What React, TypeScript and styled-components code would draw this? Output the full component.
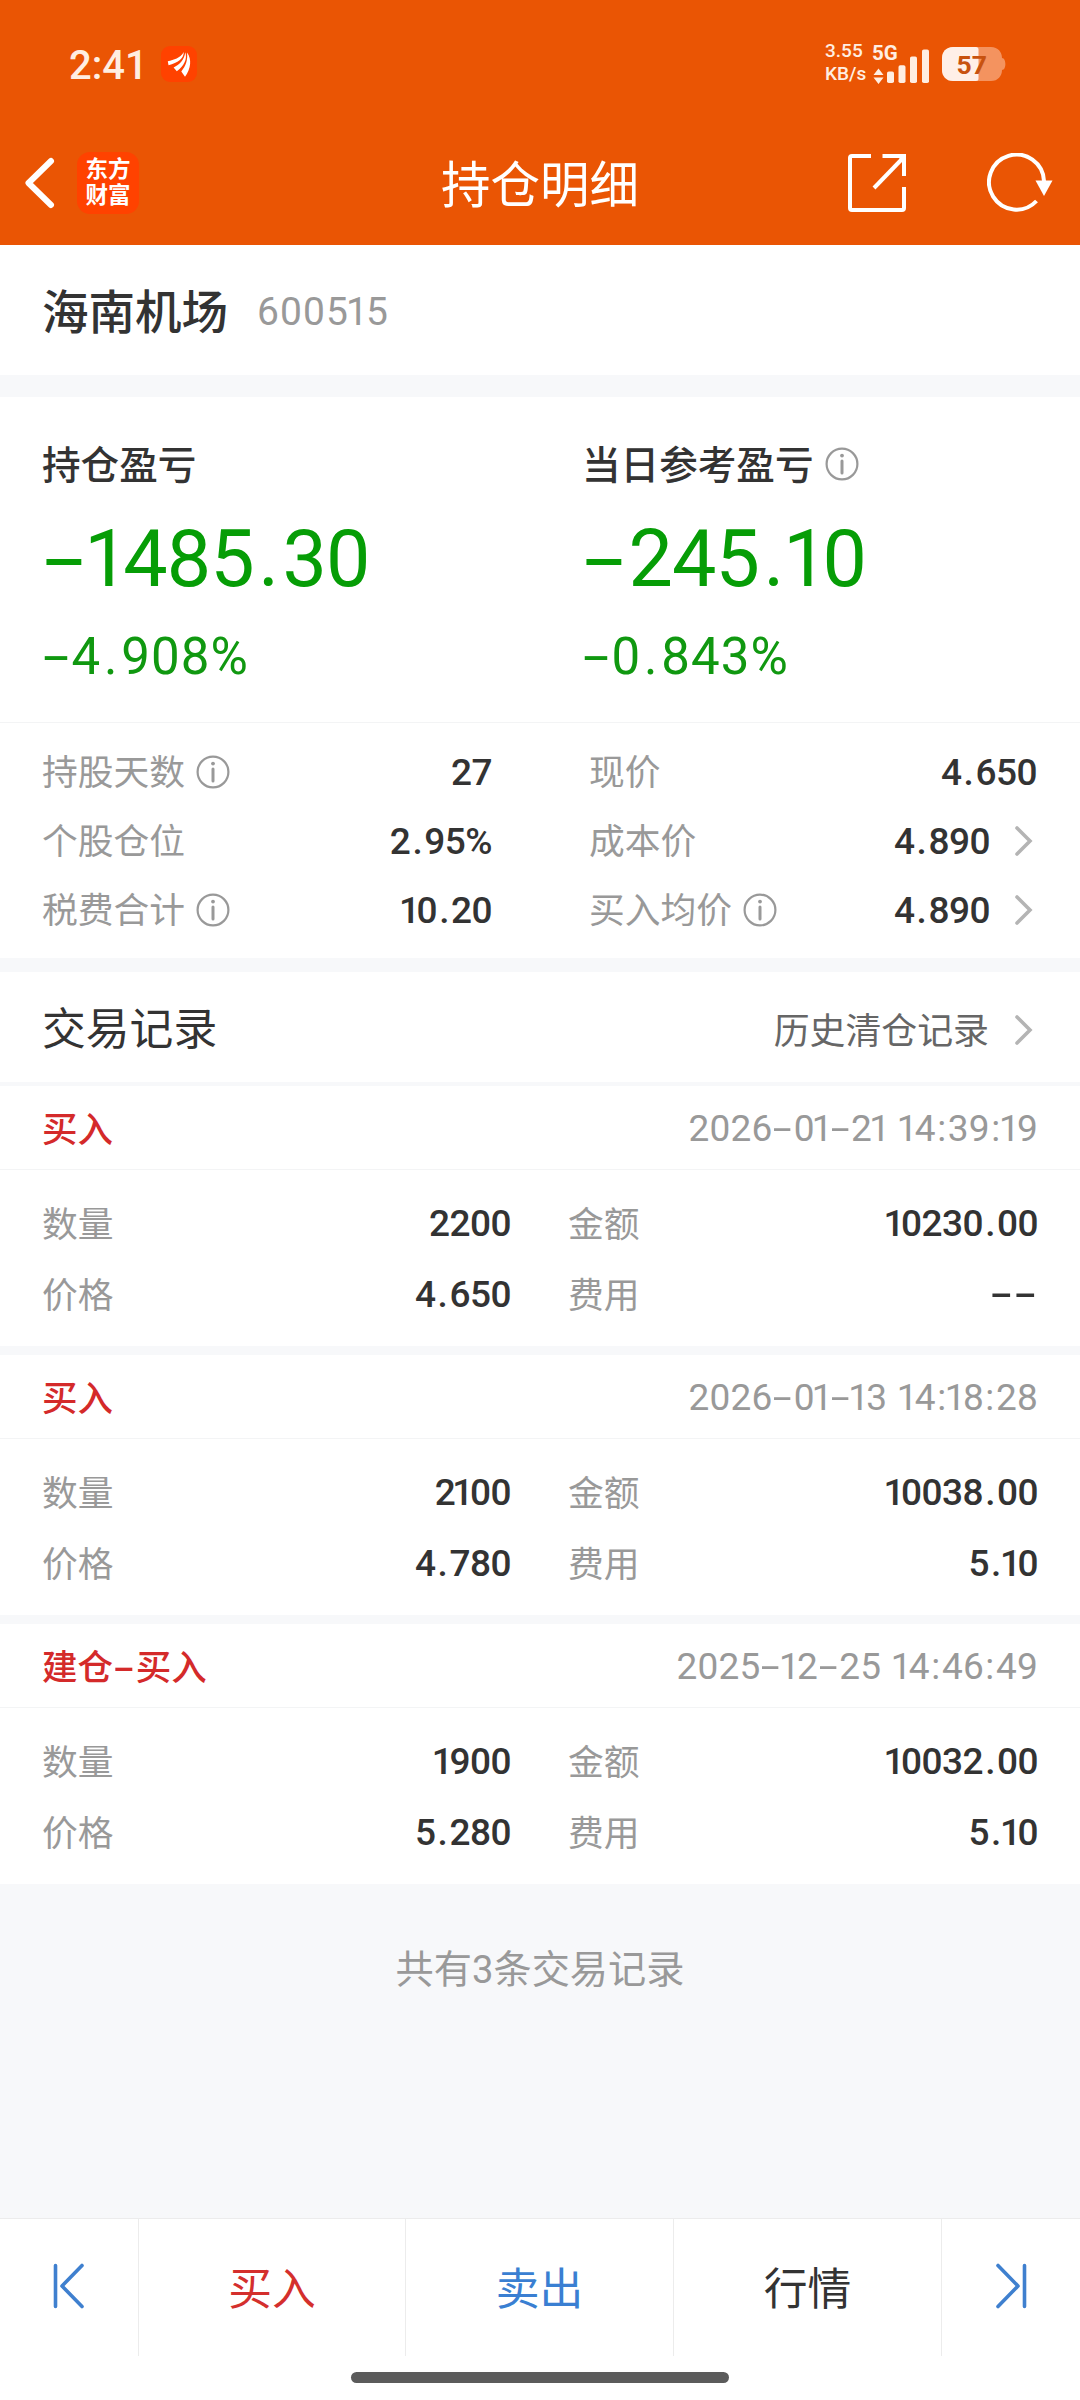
import React from "react";
import styled, { createGlobalStyle } from "styled-components";

const Global = createGlobalStyle`
  body { margin: 0; background: #f7f8fa; }
  * { box-sizing: border-box; }
`;

const Screen = styled.div`
  width: 1080px;
  height: 2400px;
  display: flex;
  flex-direction: column;
  background: #f7f8fa;
  color: #333;
  overflow: hidden;
  font-family: Roboto, "Noto Sans CJK SC", sans-serif;
`;

const Header = styled.header`
  height: 245px;
  background: #ea5504;
  color: #fff;
`;

const StatusBar = styled.div`
  height: 122px;
  padding: 6px 73px 0 69px;
  display: flex;
  align-items: center;
  color: #ffeee2;
`;

const Clock = styled.span`
  width: 92px;
  font-size: 40px;
  font-weight: 500;
  line-height: 40px;
  padding-top: 3px;
`;

const StatusRight = styled.div`
  margin-left: auto;
  display: flex;
  align-items: center;
`;

const Speed = styled.div`
  width: 47px;
  font-size: 19px;
  line-height: 23px;
  font-weight: 500;
  padding-bottom: 4px;
`;

const NavBar = styled.div`
  height: 123px;
  display: grid;
  grid-template-columns: 340px 1fr 340px;
  align-items: center;
`;

const NavLeft = styled.div`
  display: flex;
  align-items: center;
  gap: 21px;
  padding-left: 24px;
  padding-bottom: 2px;
`;

const Brand = styled.div`
  width: 62px;
  height: 62px;
  border-radius: 13px;
  background: #ff4200;
  font-size: 22.5px;
  line-height: 26px;
  font-weight: 700;
  text-align: center;
  padding-top: 4px;
`;

const Title = styled.h1`
  margin: 0;
  padding-top: 5px;
  text-align: center;
  font-size: 49.5px;
  line-height: 60px;
  font-weight: 400;
`;

const NavRight = styled.div`
  display: flex;
  align-items: center;
  justify-content: flex-end;
  gap: 80px;
  padding-right: 27px;
  padding-bottom: 2px;
`;

const Stock = styled.section`
  height: 130px;
  background: #fff;
  display: flex;
  align-items: center;
  padding: 2px 42px 0;
  gap: 29px;
`;

const StockName = styled.span`
  font-size: 46.5px;
  font-weight: 500;
  padding-bottom: 5px;
`;

const StockCode = styled.span`
  padding-top: 2px;
  font-size: 39px;
  letter-spacing: 1.1px;
  color: #999;
`;

const Summary = styled.section`
  margin-top: 22px;
  height: 326px;
  background: #fff;
  border-bottom: 1px solid #f3f4f5;
  display: grid;
  grid-template-columns: 540px 1fr;
  padding-top: 45px;
`;

const Profit = styled.div`
  padding-left: 42px;
`;

const ProfitLabel = styled.div`
  height: 44px;
  display: flex;
  align-items: center;
  gap: 12px;
  font-size: 38.6px;
  font-weight: 500;
`;

const Dash = styled.span`
  display: inline-block;
  letter-spacing: 0;
  transform: scaleX(1.85);
  margin: 0 0.17em 0 0.13em;
`;

const One = styled.span`
  margin: 0 -0.08em;
`;

const Point = styled.span`
  margin: 0 0.055em;
`;

const Colon = styled.span`
  margin: 0 0.04em;
`;

const BigNumber = styled.div`
  margin-top: 27px;
  height: 92px;
  line-height: 92px;
  padding-left: 1px;
  font-size: 79px;
  letter-spacing: -0.9px;
  color: #069d06;

  ${One} {
    margin: 0 -0.055em;
  }
`;

const Percent = styled.div`
  margin-top: 20px;
  height: 64px;
  line-height: 64px;
  font-size: 51px;
  letter-spacing: 1.1px;
  color: #109810;
`;

const Details = styled.section`
  height: 235px;
  background: #fff;
  display: grid;
  grid-template-columns: 450px 448px;
  column-gap: 97px;
  grid-auto-rows: 69px;
  padding: 14px 42px 0;
`;

const Row = styled.div`
  display: flex;
  align-items: center;
  justify-content: space-between;
`;

const Label = styled.span`
  display: flex;
  align-items: center;
  gap: 11px;
  font-size: 35.75px;
  color: #999;
`;

const LabelText = styled.span`
  padding-bottom: 4px;
`;

const Value = styled.span`
  display: flex;
  align-items: center;
  padding-top: 1px;
  font-size: 37px;
  font-weight: 500;
  letter-spacing: -0.5px;
  color: #333;
`;

const RecordsHead = styled.section`
  margin-top: 14px;
  height: 110px;
  background: #fff;
  display: flex;
  align-items: center;
  justify-content: space-between;
  padding: 5px 43px 0 42px;
`;

const RecordsTitle = styled.h2`
  margin: 0;
  padding-bottom: 8px;
  font-size: 43.8px;
  font-weight: 400;
`;

const HistoryLink = styled.span`
  display: flex;
  align-items: center;
  gap: 1px;
  font-size: 35.9px;
  color: #666;
`;

const Records = styled.div`
  margin-top: 4px;
  display: flex;
  flex-direction: column;
  gap: 9px;
`;

const RecordCard = styled.article`
  height: 260px;
  background: #fff;
`;

const RecordTop = styled.div`
  height: 84px;
  border-bottom: 1px solid #f3f4f5;
  display: flex;
  align-items: center;
  justify-content: space-between;
  padding: 2px 42px 0 42px;
`;

const Side = styled.span`
  padding-bottom: 5px;
  font-size: 35.5px;
  font-weight: 500;
  color: #d42a2a;
`;

const Time = styled.span`
  font-size: 37px;
  letter-spacing: 0.2px;
  word-spacing: 3px;
  color: #999;
`;

const RecordGrid = styled.div`
  display: grid;
  grid-template-columns: 469px 470px;
  column-gap: 57px;
  grid-auto-rows: 71px;
  padding: 18px 42px 0;

  ${Value} {
    padding: 0 0 1px;
  }
`;

const Total = styled.p`
  margin: 58px 0 0;
  line-height: 56px;
  text-align: center;
  font-size: 38.2px;
  color: #999;
`;

const Footer = styled.footer`
  margin-top: auto;
  height: 182px;
  border-top: 1px solid #ececec;
  background: #fff;
`;

const Tabs = styled.nav`
  height: 137px;
  display: grid;
  grid-template-columns: 138px 267px 268px 268px 139px;
`;

const Tab = styled.div<{ $color?: string }>`
  display: flex;
  align-items: center;
  justify-content: center;
  font-size: 43.8px;
  padding-bottom: 4px;
  color: ${(p) => p.$color ?? "#333"};
  & + & { border-left: 1px solid #ececec; }
`;

const HomePill = styled.div`
  width: 378px;
  height: 11px;
  margin: 16px auto 0;
  border-radius: 6px;
  background: #5b5b5b;
`;

const Arrow = styled.svg`
  margin-left: 24px;
  margin-right: 3px;
`;

function Num({ children }: { children: string }) {
  return (
    <span>
      {children.split("").map((c, i) => {
        if (c === "-") return <Dash key={i}>-</Dash>;
        if (c === "1") return <One key={i}>1</One>;
        if (c === ".") return <Point key={i}>.</Point>;
        if (c === ":") return <Colon key={i}>:</Colon>;
        return c;
      })}
    </span>
  );
}

function Info() {
  return (
    <svg width="34" height="34" viewBox="0 0 34 34" fill="none" stroke="#999">
      <circle cx="17" cy="17" r="15.4" strokeWidth="2.2" />
      <path d="M17 14v12" strokeWidth="3" strokeLinecap="round" />
      <circle cx="17" cy="8.6" r="1.9" fill="#999" stroke="none" />
    </svg>
  );
}

function Chevron() {
  return (
    <Arrow width="20" height="32" viewBox="0 0 20 32" fill="none" stroke="#b4b4b4" strokeWidth="3.6" strokeLinecap="round">
      <path d="M3 3l13 13L3 29" />
    </Arrow>
  );
}

function AppBadge() {
  return (
    <svg width="36" height="36" viewBox="0 0 36 36">
      <rect width="36" height="36" rx="9" fill="#ff4200" />
      <path d="M6.800 15.300C13 13.500 19 12.500 22.800 6C22.600 13 17 16.500 7.500 19.200Z" fill="#fff" />
      <path d="M12.600 21.500C18.500 18.500 23.200 14 24.300 6.200C26.500 13 23 20 15.800 25.300Z" fill="#fff" />
      <path d="M20.300 25.500C24.800 20 27 14 26 6.600C31 13 30 23 24 30.800Z" fill="#fff" />
    </svg>
  );
}

function Signal() {
  return (
    <svg width="66" height="54" viewBox="0 -6 66 54" fill="#ffeee2">
      <text x="0" y="17" fontFamily="Roboto, sans-serif" fontSize="20.500" fontWeight="700">5G</text>
      <path d="M1.500 32L6.500 25.500L11.500 32ZM1.500 34.500L6.500 41L11.500 34.500Z" />
      <rect x="15" y="28.500" width="7" height="11.500" rx="1.800" />
      <rect x="26.500" y="22.200" width="7" height="17.800" rx="1.800" />
      <rect x="38" y="13.500" width="7" height="26.500" rx="1.800" />
      <rect x="50" y="6.500" width="7" height="33.500" rx="1.800" />
    </svg>
  );
}

const BatteryIcon = styled.svg`
  margin-left: 4px;
  margin-right: 1px;
`;

function Battery() {
  return (
    <BatteryIcon width="64" height="34" viewBox="0 0 64 34">
      <path d="M11 0H49C56 0 60 5 60 11C64.500 11 64.500 23 60 23C60 29 56 34 49 34H11C4 34 0 29 0 23V11C0 5 4 0 11 0Z" fill="#f4935f" />
      <path d="M11 0H34Q36.500 0 36.500 2.500V31.500Q36.500 34 34 34H11C4 34 0 29 0 23V11C0 5 4 0 11 0Z" fill="#ffefe7" />
      <text x="14.500" y="27" fontFamily="Roboto, sans-serif" fontSize="26.500" fontWeight="700" fill="#c8520f">57</text>
    </BatteryIcon>
  );
}

const details: [string, boolean, string, boolean][] = [
  ["持股天数", true, "27", false],
  ["现价", false, "4.650", false],
  ["个股仓位", false, "2.95%", false],
  ["成本价", false, "4.890", true],
  ["税费合计", true, "10.20", false],
  ["买入均价", true, "4.890", true],
];

const records = [
  { side: "买入", time: "2026-01-21 14:39:19", qty: "2200", amount: "10230.00", price: "4.650", fee: "--" },
  { side: "买入", time: "2026-01-13 14:18:28", qty: "2100", amount: "10038.00", price: "4.780", fee: "5.10" },
  { side: "建仓-买入", time: "2025-12-25 14:46:49", qty: "1900", amount: "10032.00", price: "5.280", fee: "5.10" },
];

function Field({ label, info, value, more }: { label: string; info?: boolean; value: string; more?: boolean }) {
  return (
    <Row>
      <Label><LabelText>{label}</LabelText>{info && <Info />}</Label>
      <Value><Num>{value}</Num>{more && <Chevron />}</Value>
    </Row>
  );
}

export default function App() {
  return (
    <Screen>
      <Global />
      <Header>
        <StatusBar>
          <Clock>2:41</Clock>
          <AppBadge />
          <StatusRight>
            <Speed>3.55<br />KB/s</Speed>
            <Signal />
            <Battery />
          </StatusRight>
        </StatusBar>
        <NavBar>
          <NavLeft>
            <svg width="32" height="54" viewBox="0 0 32 54" fill="none" stroke="#fff" strokeWidth="6" strokeLinecap="round" strokeLinejoin="round">
              <path d="M27 5L4.500 27L27 49" />
            </svg>
            <Brand>东方<br />财富</Brand>
          </NavLeft>
          <Title>持仓明细</Title>
          <NavRight>
            <svg width="60" height="60" viewBox="0 0 60 60" fill="none" stroke="#fff" strokeWidth="4">
              <path d="M24 3H5Q3 3 3 5V55Q3 57 5 57H55Q57 57 57 55V34M35.500 3H57V23" />
              <path d="M27 35L56 5" />
              <path d="M50 3H57V10Z" fill="#fff" stroke="none" />
            </svg>
            <svg width="66" height="60" viewBox="0 0 66 60" fill="none" stroke="#fff" strokeWidth="4">
              <path d="M57 28A27.500 27.500 0 1 0 49.500 48" />
              <path d="M48.500 27.500H65.500L57 43Z" fill="#fff" stroke="none" />
            </svg>
          </NavRight>
        </NavBar>
      </Header>

      <Stock>
        <StockName>海南机场</StockName>
        <StockCode><Num>600515</Num></StockCode>
      </Stock>

      <Summary>
        <Profit>
          <ProfitLabel><LabelText>持仓盈亏</LabelText></ProfitLabel>
          <BigNumber><Num>-1485.30</Num></BigNumber>
          <Percent><Num>-4.908%</Num></Percent>
        </Profit>
        <Profit>
          <ProfitLabel><LabelText>当日参考盈亏</LabelText><Info /></ProfitLabel>
          <BigNumber><Num>-245.10</Num></BigNumber>
          <Percent><Num>-0.843%</Num></Percent>
        </Profit>
      </Summary>

      <Details>
        {details.map(([label, info, value, more]) => (
          <Field key={label} label={label} info={info} value={value} more={more} />
        ))}
      </Details>

      <RecordsHead>
        <RecordsTitle>交易记录</RecordsTitle>
        <HistoryLink><LabelText>历史清仓记录</LabelText><Chevron /></HistoryLink>
      </RecordsHead>

      <Records>
        {records.map((r) => (
          <RecordCard key={r.time}>
            <RecordTop>
              <Side><Num>{r.side}</Num></Side>
              <Time><Num>{r.time}</Num></Time>
            </RecordTop>
            <RecordGrid>
              <Field label="数量" value={r.qty} />
              <Field label="金额" value={r.amount} />
              <Field label="价格" value={r.price} />
              <Field label="费用" value={r.fee} />
            </RecordGrid>
          </RecordCard>
        ))}
      </Records>

      <Total>共有3条交易记录</Total>

      <Footer>
        <Tabs>
          <Tab>
            <svg width="34" height="46" viewBox="0 0 34 46" fill="none" stroke="#3f80cf" strokeWidth="3.6" strokeLinecap="round" strokeLinejoin="round">
              <path d="M3.500 2.500V43.500M30 2.500L10 23L30 43.500" />
            </svg>
          </Tab>
          <Tab $color="#d42f2d">买入</Tab>
          <Tab $color="#3a7fd2">卖出</Tab>
          <Tab>行情</Tab>
          <Tab>
            <svg width="34" height="46" viewBox="0 0 34 46" fill="none" stroke="#3f80cf" strokeWidth="3.6" strokeLinecap="round" strokeLinejoin="round">
              <path d="M30.500 2.500V43.500M4 2.500L24 23L4 43.500" />
            </svg>
          </Tab>
        </Tabs>
        <HomePill />
      </Footer>
    </Screen>
  );
}
